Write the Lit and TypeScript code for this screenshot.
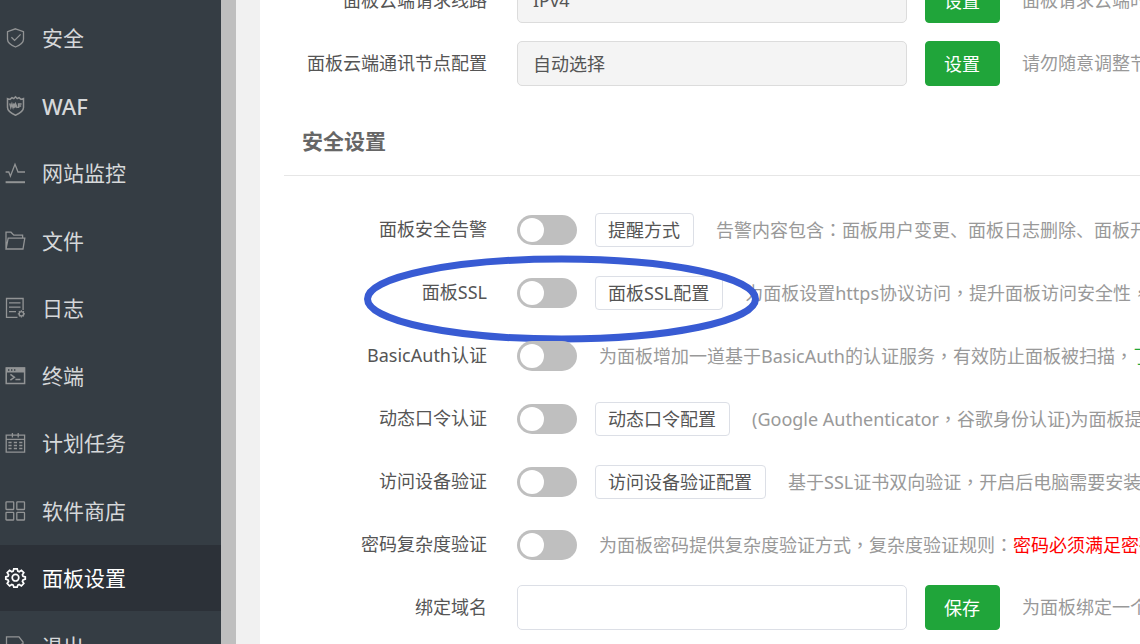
import { LitElement, html, css, svg, nothing } from "lit";
import { customElement } from "lit/decorators.js";
import { classMap } from "lit/directives/class-map.js";

const icons: Record<string, unknown> = {
  shield: svg`<path d="M10.500 .8 18.500 3.600v7.600c0 3.300-3.200 5.800-8 7.800-4.800-2-8-4.500-8-7.800V3.600z"/><path d="m6.400 9.200 3.200 3.200 6-6"/>`,
  waf: svg`<path stroke-width="1.500" d="M2.500 2.600 5 3.400 7 1.600l1.800 1L10.500.8l1.700 1.800 1.800-1 2 1.800 2.500-.8v9c0 3.200-3.200 5.600-8 7.600-4.800-2-8-4.400-8-7.600z"/><path stroke-width="1.500" d="m4.800 7.400 1 4 1.100-3.400L8 11.400l1-4M8.800 12l1.700-4.200 1.700 4.200M9.400 10.800h2.200M13.600 12V8h3M13.600 10h2.600"/>`,
  monitor: svg`<path d="M.6 9h3.200l1.600 4.200L10 1.200 13 9h7"/><path stroke-width="2" d="M.6 19.200H20"/>`,
  folder: svg`<path d="M1 18V1.200h5l2.800 3h8.800v2.600M1 18 3.200 7.200H19.800L18 18z"/>`,
  log: svg`<path d="M12.500 19.300H1.500V.5h16.600v11.400M4 4.800h11.500M4 9.200h11.500M4 13.600h7"/><circle cx="16.400" cy="15.800" r="2.200"/><path d="M16.400 12.200v1.200M16.400 18.200v1.200M12.800 15.800h1.200M18.800 15.800H20M13.900 13.300l.8.800M18.100 17.500l.8.800M18.900 13.300l-.8.800M14.700 17.500l-.8.800"/>`,
  terminal: svg`<path stroke-width="1.500" d="M1.200 2h18.400v15.400H1.200z"/><path class="solid" d="M1 1.500h19v5H1z"/><path stroke="#353d44" d="M3 4h1.400M6 4h1.400M9 4h1.400"/><path stroke-width="1.500" d="m5.400 8.400 4 2.900-4 2.900M10.400 13.400h5"/>`,
  calendar: svg`<path d="M1.200 2.200h18.400v17H1.200zM1.200 6.400h18.400M7.400 0v4.500M13.200 0v4.500M3.400 9.500h3.200M8.800 9.500H12M14.200 9.500h3.200M3.400 12.500h3.200M8.800 12.500H12M14.200 12.500h3.200M3.400 15.500h3.200M8.800 15.500H12M14.200 15.500h3.200"/>`,
  apps: svg`<rect x="1" y=".8" width="7.700" height="7.700" rx=".6"/><rect x="11.800" y=".8" width="7.700" height="7.700" rx=".6"/><rect x="1" y="11.300" width="7.700" height="7.700" rx=".6"/><rect x="11.800" y="11.300" width="7.700" height="7.700" rx=".6"/>`,
  gear: svg`<circle cx="10.500" cy="9.700" r="3.300"/><path d="M8.800.9h3.400l.6 2.200 1.400.6 2.200-1.400 2.400 2.400-1.400 2.200.6 1.400 2.300.6v2.200l-2.300.8-.6 1.400 1.400 2.200-2.400 2.400-2.200-1.400-1.400.6-.6 2.100H8.800l-.6-2.100-1.400-.6-2.200 1.400-2.400-2.400 1.400-2.200-.6-1.400-2.200-.8V8.900l2.200-.6.600-1.400-1.400-2.200 2.400-2.400 2.200 1.400 1.400-.6z"/>`,
  exit: svg`<path d="M15.500 16v3H1.500V.8H14l4 5.200v2M8.500 10.500h11M16.500 7.500l3 3-3 3"/>`,
};

const menu = [
  { icon: "shield", label: "安全" },
  { icon: "waf", label: "WAF" },
  { icon: "monitor", label: "网站监控" },
  { icon: "folder", label: "文件" },
  { icon: "log", label: "日志" },
  { icon: "terminal", label: "终端" },
  { icon: "calendar", label: "计划任务" },
  { icon: "apps", label: "软件商店" },
  { icon: "gear", label: "面板设置", active: true },
  { icon: "exit", label: "退出" },
];

interface FieldRow {
  id: string;
  label: string;
  value: string;
  action: string;
  hint: string;
  readonly?: boolean;
}

interface SwitchRow {
  id: string;
  label: string;
  config?: string;
  hint: string;
  link?: string;
  warn?: string;
  marked?: boolean;
}

const cloudRows: FieldRow[] = [
  { id: "route", label: "面板云端请求线路", value: "IPv4", action: "设置", hint: "面板请求云端时", readonly: true },
  { id: "node", label: "面板云端通讯节点配置", value: "自动选择", action: "设置", hint: "请勿随意调整节", readonly: true },
];

const switchRows: SwitchRow[] = [
  { id: "alarm", label: "面板安全告警", config: "提醒方式", hint: "告警内容包含：面板用户变更、面板日志删除、面板开" },
  { id: "ssl", label: "面板SSL", config: "面板SSL配置", hint: "为面板设置https协议访问，提升面板访问安全性，", marked: true },
  { id: "basic", label: "BasicAuth认证", hint: "为面板增加一道基于BasicAuth的认证服务，有效防止面板被扫描，", link: "了" },
  { id: "otp", label: "动态口令认证", config: "动态口令配置", hint: "(Google Authenticator，谷歌身份认证)为面板提" },
  { id: "device", label: "访问设备验证", config: "访问设备验证配置", hint: "基于SSL证书双向验证，开启后电脑需要安装" },
  { id: "password", label: "密码复杂度验证", hint: "为面板密码提供复杂度验证方式，复杂度验证规则：", warn: "密码必须满足密码" },
];

const domainRow: FieldRow = { id: "domain", label: "绑定域名", value: "", action: "保存", hint: "为面板绑定一个" };

// Commas and colons sit in the middle of their em box.
const prose = (text: string) =>
  text.split(/([，：])/).map((part) => (/^[，：]$/.test(part) ? html`<span class="mid">${part}</span>` : part));

@customElement("side-menu")
export class SideMenu extends LitElement {
  static styles = css`
    :host {
      display: block;
      overflow: hidden;
      background: #353d44;
    }
    .list {
      list-style: none;
      margin: 0;
      padding: 4px 0 0;
    }
    .item {
      margin-top: 1px;
    }
    .item:nth-child(even) {
      margin-top: 2px;
    }
    .link {
      display: flex;
      align-items: center;
      gap: 17px;
      height: 66px;
      padding-left: 5px;
      color: #d6d8da;
      font-size: 21px;
      line-height: 30px;
      text-decoration: none;
      white-space: nowrap;
    }
    .link:lang(en) {
      font-size: 22px;
      font-weight: 500;
    }
    .link.active {
      background: #2c3138;
      color: #fff;
    }
    .icon {
      width: 20px;
      height: 20px;
      flex: none;
      fill: none;
      stroke: #929495;
      stroke-width: 1.3;
      overflow: visible;
    }
    .active .icon {
      stroke: #fff;
      stroke-width: 1.7;
    }
    .solid {
      fill: #929495;
      stroke: none;
    }
  `;

  render() {
    return html`<nav>
      <ul class="list">
        ${menu.map(
          (m) => html`<li class="item">
            <a
              class=${classMap({ link: true, active: !!m.active })}
              lang=${/^[A-Z]+$/.test(m.label) ? "en" : "zh-CN"}
              href="#"
            >
              <svg class="icon" viewBox="0 0 20 20" aria-hidden="true">${icons[m.icon]}</svg>
              <span>${m.label}</span>
            </a>
          </li>`
        )}
      </ul>
    </nav>`;
  }
}

@customElement("app-root")
export class AppRoot extends LitElement {
  static styles = css`
    :host {
      display: grid;
      grid-template-columns: 221px 15px minmax(0, 1fr);
      height: 100vh;
      overflow: hidden;
      background: #f1f1f1;
      font-family: "Noto Sans", "Noto Sans CJK SC", sans-serif;
      font-size: 18px;
      line-height: 26px;
      color: #555;
    }
    .track {
      background: #bfbfbf;
    }
    .panel {
      min-width: 0;
      margin-left: 24px;
      padding-left: 24px;
      background: #fff;
      overflow: hidden;
    }
    .group {
      display: flex;
      flex-direction: column;
      gap: 18px;
    }
    /* The panel is shown scrolled part of the way through its first row. */
    .scrolled {
      margin-top: -22px;
    }
    .title {
      margin: 22px 0 31px;
      padding: 17px 18px 18px;
      border-bottom: 1px solid #e6e6e6;
      font-size: 21px;
      line-height: 32px;
      font-weight: 700;
      color: #666;
    }
    .row {
      position: relative;
      display: flex;
      align-items: center;
      height: 45px;
      white-space: nowrap;
    }
    .label {
      flex: none;
      width: 203px;
      margin-right: 30px;
      padding-bottom: 1px;
      text-align: right;
    }
    .field {
      box-sizing: border-box;
      flex: none;
      width: 390px;
      height: 45px;
      padding: 0 15px 2px;
      border: 1px solid #dcdfe6;
      border-radius: 5px;
      background: #fff;
      font: inherit;
      color: inherit;
      outline: none;
    }
    .field:read-only {
      border-color: #dcdcdc;
      background: #f4f4f4;
    }
    .switch {
      appearance: none;
      flex: none;
      display: flex;
      align-items: center;
      box-sizing: border-box;
      width: 60px;
      height: 30px;
      margin: 0;
      padding: 3px;
      border-radius: 15px;
      background: #bfbfbf;
    }
    .switch::before {
      content: "";
      width: 24px;
      height: 24px;
      border-radius: 50%;
      background: #fff;
    }
    .switch:checked {
      justify-content: flex-end;
      background: #20a53a;
    }
    .button {
      flex: none;
      box-sizing: border-box;
      height: 34px;
      margin: 0 0 0 18px;
      padding: 0 13px 0 12px;
      border: 1px solid #dcdfe6;
      border-radius: 4px;
      background: #fff;
      font: inherit;
      color: inherit;
    }
    .button.primary {
      width: 75px;
      height: 45px;
      border-color: #20a53a;
      background: #20a53a;
      color: #fff;
    }
    .hint {
      margin-left: 22px;
      padding-bottom: 1px;
      color: #999;
    }
    .mid {
      font-family: "Noto Sans CJK TC", sans-serif;
    }
    .more {
      color: #20a53a;
      text-decoration: none;
    }
    .warn {
      color: #f00;
    }
    .mark {
      position: absolute;
      left: 80px;
      top: -15px;
      width: 395px;
      height: 88px;
      fill: none;
      stroke: #385bd3;
      stroke-width: 7;
      pointer-events: none;
    }
  `;

  private fieldRow(r: FieldRow) {
    return html`<div class="row">
      <label class="label" for=${r.id}>${r.label}</label>
      <input class="field" id=${r.id} type="text" .value=${r.value} ?readonly=${!!r.readonly} />
      <button class="button primary" type="button">${r.action}</button>
      <span class="hint">${prose(r.hint)}</span>
    </div>`;
  }

  private switchRow(r: SwitchRow) {
    return html`<div class="row">
      <label class="label" for=${r.id}>${r.label}</label>
      <input class="switch" id=${r.id} type="checkbox" role="switch" />
      ${r.config ? html`<button class="button" type="button">${r.config}</button>` : nothing}
      <span class="hint"
        >${prose(r.hint)}${r.link ? html`<a class="more" href="#">${r.link}</a>` : nothing}${r.warn
          ? html`<span class="warn">${r.warn}</span>`
          : nothing}</span
      >
      ${r.marked
        ? html`<svg class="mark" viewBox="0 0 395 88" aria-hidden="true">
            <ellipse cx="197.500" cy="44" rx="194" ry="40" />
          </svg>`
        : nothing}
    </div>`;
  }

  render() {
    return html`
      <side-menu></side-menu>
      <div class="track"></div>
      <main class="panel">
        <div class="group scrolled">${cloudRows.map((r) => this.fieldRow(r))}</div>
        <h2 class="title">安全设置</h2>
        <div class="group">${switchRows.map((r) => this.switchRow(r))} ${this.fieldRow(domainRow)}</div>
      </main>
    `;
  }
}
